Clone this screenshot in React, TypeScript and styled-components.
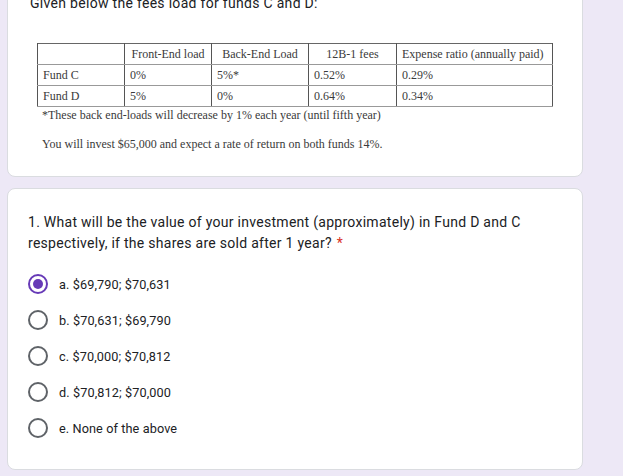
import React from "react";
import styled, { createGlobalStyle } from "styled-components";

const GlobalStyle = createGlobalStyle`
  html, body {
    margin: 0;
    padding: 0;
    background: #ede8f6;
    overflow: hidden;
  }
`;

const Page = styled.div`
  display: flex;
  flex-direction: column;
  gap: 11px;
  margin-top: -32px;
  padding: 0 40px 0 7px;
  font-family: Roboto, "Noto Sans", Arial, sans-serif;
  color: #202124;
`;

const Card = styled.div<{ $pad: string }>`
  background: #ffffff;
  border: 1px solid #dadce0;
  border-radius: 8px;
  padding: ${(p) => p.$pad};
`;

const Heading = styled.div`
  font-size: 14px;
  line-height: 21px;
  letter-spacing: 0.3px;
`;

const ImageBlock = styled.div`
  margin-top: 29px;
  padding-left: 7px;
  font-family: "Liberation Serif", "Times New Roman", serif;
  font-size: 12px;
  color: #3a3a3a;
`;

const Table = styled.table`
  border-collapse: collapse;
  border: 1px solid #666;
`;

const Cell = styled.td<{ $w: number; $center?: boolean }>`
  width: ${(p) => p.$w}px;
  box-sizing: border-box;
  height: 21px;
  padding: 0 5px;
  border-left: 1px solid #555;
  border-right: 1px solid #555;
  border-bottom: 1px solid #999;
  text-align: ${(p) => (p.$center ? "center" : "left")};
  vertical-align: middle;
  white-space: nowrap;
`;

const Note = styled.div<{ $top: number }>`
  margin-top: ${(p) => p.$top}px;
  padding-left: 5px;
  line-height: 16px;
`;

const Question = styled.div`
  font-size: 14px;
  line-height: 21px;
  letter-spacing: 0.28px;
  margin-bottom: 12px;
`;

const Star = styled.span`
  color: #d93025;
  margin-left: 5px;
`;

const Option = styled.label`
  display: flex;
  align-items: center;
  height: 36px;
  gap: 11px;
  font-size: 12.7px;
  color: #202124;
  letter-spacing: 0.1px;
`;

const Radio = styled.span<{ $checked?: boolean }>`
  box-sizing: border-box;
  width: 20px;
  height: 20px;
  border-radius: 50%;
  border: 2px solid ${(p) => (p.$checked ? "#673ab7" : "#5f6368")};
  display: flex;
  align-items: center;
  justify-content: center;
  &::after {
    content: "";
    display: ${(p) => (p.$checked ? "block" : "none")};
    width: 10px;
    height: 10px;
    border-radius: 50%;
    background: #673ab7;
  }
`;

const widths = [87, 87, 97, 88, 156];
const header = ["", "Front-End load", "Back-End Load", "12B-1 fees", "Expense ratio (annually paid)"];
const rows = [
  ["Fund C", "0%", "5%*", "0.52%", "0.29%"],
  ["Fund D", "5%", "0%", "0.64%", "0.34%"],
];

const options = [
  "a. $69,790; $70,631",
  "b. $70,631; $69,790",
  "c. $70,000; $70,812",
  "d. $70,812; $70,000",
  "e. None of the above",
];

export default function App() {
  return (
    <>
      <GlobalStyle />
      <Page>
        <Card $pad="24px 22px 24px 22px">
          <Heading>Given below the fees load for funds C and D:</Heading>
          <ImageBlock>
            <Table>
              <tbody>
                <tr>
                  {header.map((h, i) => (
                    <Cell key={i} $w={widths[i]} $center={i > 0 && i < 4}>
                      {h}
                    </Cell>
                  ))}
                </tr>
                {rows.map((r, ri) => (
                  <tr key={ri}>
                    {r.map((c, i) => (
                      <Cell key={i} $w={widths[i]}>
                        {c}
                      </Cell>
                    ))}
                  </tr>
                ))}
              </tbody>
            </Table>
            <Note $top={0}>*These back end-loads will decrease by 1% each year (until fifth year)</Note>
            <Note $top={13}>You will invest $65,000 and expect a rate of return on both funds 14%.</Note>
          </ImageBlock>
        </Card>
        <Card $pad="23px 21px 23px 20px">
          <Question>
            1. What will be the value of your investment (approximately) in Fund D and C respectively, if the shares are sold after 1 year?
            <Star>*</Star>
          </Question>
          {options.map((o, i) => (
            <Option key={o}>
              <Radio $checked={i === 0} />
              {o}
            </Option>
          ))}
        </Card>
      </Page>
    </>
  );
}
